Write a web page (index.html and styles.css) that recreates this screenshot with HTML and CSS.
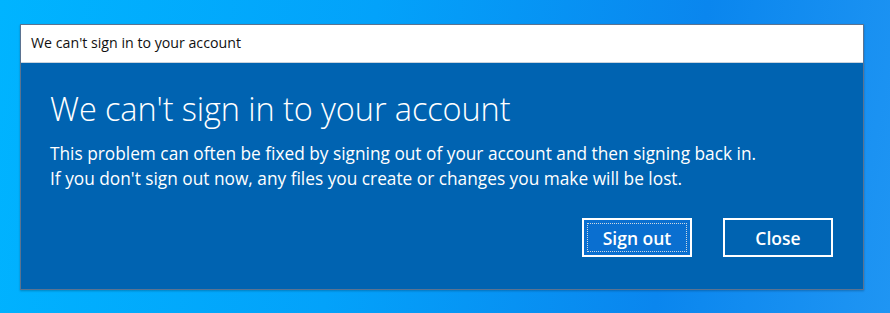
FILE: index.html
```html
<!DOCTYPE html>
<html lang="en">
<head>
  <meta charset="UTF-8">
  <title>We can't sign in to your account</title>
  <link rel="stylesheet" href="styles.css">
</head>
<body>
  <div class="desktop">
    <div class="dialog">
      <div class="title-bar">We can't sign in to your account</div>
      <div class="dialog-body">
        <h1>We can't sign in to your account</h1>
        <p>This problem can often be fixed by signing out of your account and then signing back in.<br>
        If you don't sign out now, any files you create or changes you make will be lost.</p>
        <div class="actions">
          <button class="btn focused"><span>Sign out</span></button>
          <button class="btn"><span>Close</span></button>
        </div>
      </div>
    </div>
  </div>
</body>
</html>
```
FILE: styles.css
```css
/* Windows 10 style error dialog on the desktop */
html, body {
  margin: 0;
  height: 100%;
}
body {
  font-family: "Open Sans", "Noto Sans", sans-serif;
}
.desktop {
  height: 313px;
  padding: 24px 26px 0 20px;
  box-sizing: border-box;
  background: linear-gradient(100deg, #00b4ff 0%, #03a2fa 40%, #0a86ee 75%, #1f95f3 100%);
}
.dialog {
  height: 264px;
  border: 1px solid #5b7391;
  background-color: #0063b1;
  display: flex;
  flex-direction: column;
  box-shadow: 0 1px 2px rgba(0, 0, 0, 0.25);
}
.title-bar {
  background-color: #fff;
  height: 37px;
  line-height: 36px;
  padding-left: 10px;
  font-size: 14.2px;
  color: #111;
  border-bottom: 1px solid #c9d3de;
}
.dialog-body {
  flex: 1;
  padding: 24px 30px 0 29px;
  color: #fff;
}
h1 {
  margin: 0;
  font-size: 32.5px;
  font-weight: 300;
  line-height: 44px;
  letter-spacing: -0.1px;
}
p {
  margin: 10px 0 0;
  font-size: 17.3px;
  line-height: 25px;
}
.actions {
  display: flex;
  justify-content: flex-end;
  gap: 31px;
  margin-top: 27px;
}
.btn {
  width: 110px;
  height: 39px;
  padding: 3px;
  border: 2px solid #fff;
  background-color: #0063b1;
  color: #fff;
  font-family: inherit;
  font-size: 17.5px;
  font-weight: 600;
  cursor: pointer;
}
.btn span {
  display: flex;
  align-items: center;
  justify-content: center;
  height: 100%;
  box-sizing: border-box;
  border: 1px dotted transparent;
}
.btn.focused {
  background-color: #0a6fd0;
}
.btn.focused span {
  border-color: #d0d8e0;
}
```
